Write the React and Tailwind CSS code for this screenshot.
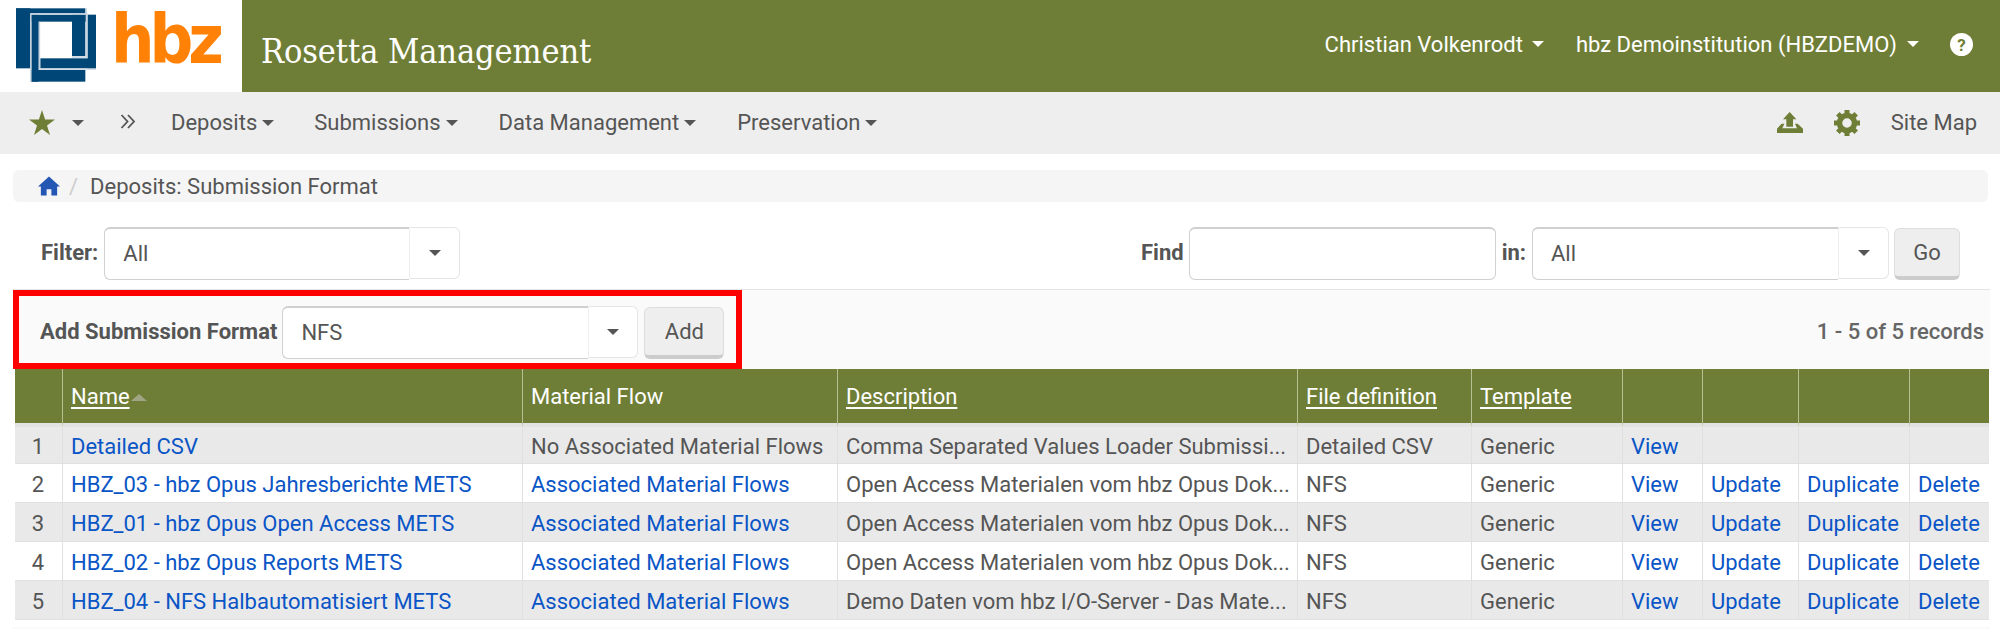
import React from "react";

const Caret = ({ className = "border-t-[#555]" }) => (
  <span className={`inline-block w-0 h-0 border-x-[6px] border-x-transparent border-t-[6px] ${className}`} />
);

const Logo = () => (
  <svg width="80" height="74" viewBox="47 25 240 220" className="shrink-0">
    <g fill="#004677">
      <rect x="47" y="25" width="208" height="15" />
      <rect x="47" y="25" width="43" height="180" />
      <rect x="93" y="44" width="22" height="201" />
      <rect x="93" y="210" width="162" height="35" />
      <rect x="93" y="44" width="165" height="21" />
      <rect x="215" y="44" width="40" height="124" />
      <rect x="120" y="175" width="167" height="30" />
      <rect x="262" y="44" width="25" height="161" />
    </g>
    <path d="M90 42H262M91.500 40V245M258 25V172M215 171H258M115 207.500H287M117.500 65V207" fill="none" stroke="#c8d4df" strokeWidth="4" />
  </svg>
);

const Gear = () => (
  <svg width="26" height="26" viewBox="0 0 26 26" className="ml-[31px]">
    <circle cx="13" cy="13" r="7.500" fill="none" stroke="#6f7e36" strokeWidth="5.500" />
    {[0, 45, 90, 135, 180, 225, 270, 315].map((a) => (
      <rect key={a} x="10.500" y="0" width="5" height="5" fill="#6f7e36" transform={`rotate(${a} 13 13)`} />
    ))}
  </svg>
);

const Sel = ({ w, value, arrow = 51 }) => (
  <div className="flex h-[53px] shrink-0" style={{ width: w }}>
    <div className="flex-1 flex items-center pl-[18px] pb-[1px] bg-white border border-[#d0d0d0] border-t-2 border-r-0 rounded-l-md">{value}</div>
    <div className="flex items-center justify-center bg-white border border-[#e6e6e6] border-l-[#eee] rounded-r-md mb-[1px]" style={{ width: arrow }}><Caret /></div>
  </div>
);

const Btn = ({ w, children }) => (
  <button className="h-[52px] flex items-center justify-center bg-[#eee] border border-[#ddd] border-b-4 border-b-[#ccc] rounded-md text-[#555] shrink-0" style={{ width: w }}>{children}</button>
);

const A = ({ children }) => <a className="text-[#0a55c6]">{children}</a>;

const rows = [
  ["1", "Detailed CSV", null, "Comma Separated Values Loader Submissi...", "Detailed CSV", false],
  ["2", "HBZ_03 - hbz Opus Jahresberichte METS", true, "Open Access Materialen vom hbz Opus Dok...", "NFS", true],
  ["3", "HBZ_01 - hbz Opus Open Access METS", true, "Open Access Materialen vom hbz Opus Dok...", "NFS", true],
  ["4", "HBZ_02 - hbz Opus Reports METS", true, "Open Access Materialen vom hbz Opus Dok...", "NFS", true],
  ["5", "HBZ_04 - NFS Halbautomatisiert METS", true, "Demo Daten vom hbz I/O-Server - Das Mate...", "NFS", true],
];

const th = "h-[58px] p-0 px-[8px] border-b-4 border-b-[#e2e2e2] border-l border-l-[#b7c093] first:border-l-0 text-left font-normal text-white bg-[#6f7e36]";
const td = "border-b border-b-[#e0e0e0] border-l border-l-[#e0e0e0] first:border-l-0 p-0 pt-[2px] px-[8px] whitespace-nowrap";

export default function App() {
  return (
    <div className="min-h-[629px] bg-white text-[#555] text-[22px] overflow-hidden" style={{ fontFamily: "Roboto, sans-serif" }}>
      <header className="flex h-[92px] bg-[#6f7e36] text-white">
        <div className="w-[242px] bg-white flex items-start pt-[8px] pl-[16px] gap-[15px]">
          <Logo />
          <span className="text-[#ff8207] font-bold text-[68px] leading-[68px] -mt-[2px] tracking-[-5px]" style={{ fontFamily: '"DejaVu Sans Condensed", "DejaVu Sans", sans-serif' }}>hbz</span>
        </div>
        <div className="flex-1 flex items-center pl-[19px] pr-[27px]">
          <span className="text-[34px] mt-[10px] tracking-[-0.1px]" style={{ fontFamily: '"DejaVu Serif Condensed", "Liberation Serif", serif' }}>Rosetta Management</span>
          <div className="ml-auto flex items-center -mt-[4px]">
            <span>Christian Volkenrodt</span>
            <span className="ml-[9px] mr-[32px] flex"><Caret className="border-t-white" /></span>
            <span>hbz Demoinstitution (HBZDEMO)</span>
            <span className="ml-[10px] mr-[31px] flex"><Caret className="border-t-white" /></span>
            <svg width="23" height="23" viewBox="0 0 23 23"><circle cx="11.500" cy="11.500" r="11.500" fill="#fff" /><text x="11.500" y="17.500" textAnchor="middle" fontSize="17" fontWeight="700" fill="#6f7e36" fontFamily="Roboto">?</text></svg>
          </div>
        </div>
      </header>

      <nav className="flex items-center h-[62px] bg-[#eee] pl-[29px] pr-[23px] pb-[1px]">
        <svg width="26" height="25" viewBox="0 0 26 25"><path d="M13 0l3.100 9.500H26l-8 5.900 3 9.600-8-5.900L5 25l3-9.600-8-5.900h9.900z" fill="#6f7e36" /></svg>
        <span className="ml-[17px] flex"><Caret /></span>
        <svg width="16" height="15" viewBox="0 0 16 15" className="ml-[36px] -mt-[2px]" fill="none" stroke="#555" strokeWidth="1.800"><path d="M1.500 1l6 6.500-6 6.500M8 1l6 6.500-6 6.500" /></svg>
        <div className="flex items-center ml-[35px]">
          <span>Deposits</span><span className="ml-[5px] mr-[40px] flex"><Caret /></span>
          <span>Submissions</span><span className="ml-[5px] mr-[41px] flex"><Caret /></span>
          <span>Data Management</span><span className="ml-[5px] mr-[41px] flex"><Caret /></span>
          <span>Preservation</span><span className="ml-[5px] flex"><Caret /></span>
        </div>
        <div className="ml-auto flex items-center">
          <svg width="26" height="21" viewBox="52 48 78 63" fill="#6f7e36"><path d="M90 48L110 70H100V92H80V70H70Z" /><path d="M66 83H74L68 97H112L106 83H114L130 98V111H52V98Z" /></svg>
          <Gear />
          <span className="ml-[31px]">Site Map</span>
        </div>
      </nav>

      <div className="ml-[13px] mr-[12px] mt-[16px] h-[32px] bg-[#f5f5f5] rounded-md flex items-center pl-[25px]">
        <svg width="22" height="20" viewBox="0 0 23 20" fill="#2456b4"><path d="M11.500 0L23 10.500h-3V20h-6v-6.500H9V20H3v-9.500H0z" /></svg>
        <span className="text-[#ccc] ml-[9px]">/</span>
        <span className="ml-[12px]">Deposits: Submission Format</span>
      </div>

      <div className="flex items-center h-[53px] mt-[25px] pl-[41px] pr-[40px]">
        <span className="font-bold mr-[6px] pb-[2px]">Filter:</span>
        <Sel w={356} value="All" />
        <span className="font-bold ml-auto mr-[5px] pb-[2px]">Find</span>
        <div className="w-[307px] h-[53px] bg-white border border-[#d0d0d0] border-t-2 rounded-md" />
        <span className="font-bold ml-[6px] mr-[6px] pb-[2px]">in:</span>
        <Sel w={357} value="All" />
        <span className="ml-[5px]"><Btn w={66}>Go</Btn></span>
      </div>

      <div className="mt-[9px] ml-[13px] mr-[10px] border-t border-[#e5e5e5] bg-[#fafafa]">
        <div className="flex items-center justify-between h-[79px] pr-[6px]">
          <div className="flex items-center w-[729px] h-[79px] border-[6px] border-[#f00] pl-[21px]">
            <span className="font-bold mr-[5px] mt-[3px] whitespace-nowrap">Add Submission Format</span>
            <span className="mt-[6px]"><Sel w={356} value="NFS" arrow={50} /></span>
            <span className="ml-[6px] mt-[6px]"><Btn w={80}>Add</Btn></span>
          </div>
          <span className="text-[#666] font-medium mt-[4px]">1 - 5 of 5 records</span>
        </div>
      </div>

      <table className="table-fixed border-separate border-spacing-0 w-[1974px] ml-[15px]">
        <colgroup>
          <col className="w-[47px]" /><col className="w-[460px]" /><col className="w-[315px]" /><col className="w-[460px]" /><col className="w-[174px]" /><col className="w-[151px]" /><col className="w-[80px]" /><col className="w-[96px]" /><col className="w-[111px]" /><col className="w-[80px]" />
        </colgroup>
        <thead>
          <tr>
            <th className={th} />
            <th className={th}>
              <span className="underline underline-offset-[3px]">Name<span className="inline-block ml-[1px] align-middle w-0 h-0 border-x-[8px] border-x-transparent border-b-[7px] border-b-[#a0a585]" /></span>
            </th>
            <th className={th}>Material Flow</th>
            <th className={th}><span className="underline underline-offset-[3px]">Description</span></th>
            <th className={th}><span className="underline underline-offset-[3px]">File definition</span></th>
            <th className={th}><span className="underline underline-offset-[3px]">Template</span></th>
            <th className={th} /><th className={th} /><th className={th} /><th className={th} />
          </tr>
        </thead>
        <tbody>
          {rows.map((r, i) => (
            <tr key={r[0]} className={`${i === 0 ? "h-[37px]" : "h-[39px]"} ${i % 2 === 0 ? "bg-[#e9e9e9]" : "bg-white"}`}>
              <td className={`${td} text-center pr-[9px]`}>{r[0]}</td>
              <td className={td}><A>{r[1]}</A></td>
              <td className={td}>{r[2] ? <A>Associated Material Flows</A> : "No Associated Material Flows"}</td>
              <td className={td}>{r[3]}</td>
              <td className={td}>{r[4]}</td>
              <td className={td}>Generic</td>
              <td className={td}><A>View</A></td>
              <td className={td}>{r[5] && <A>Update</A>}</td>
              <td className={td}>{r[5] && <A>Duplicate</A>}</td>
              <td className={td}>{r[5] && <A>Delete</A>}</td>
            </tr>
          ))}
        </tbody>
      </table>
      <div className="mt-[7px] ml-[13px] mr-[10px] h-[2px] bg-[#fafafa]" />
    </div>
  );
}
